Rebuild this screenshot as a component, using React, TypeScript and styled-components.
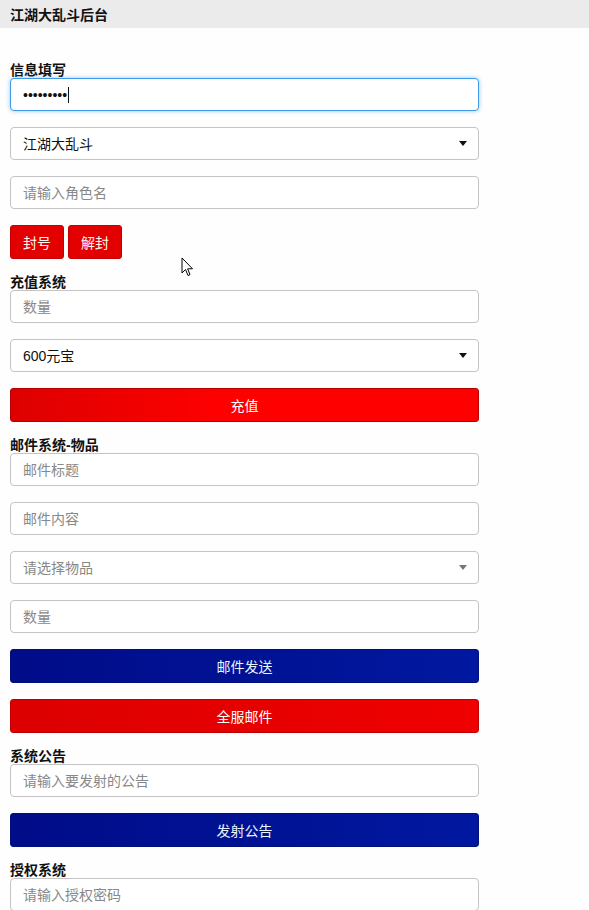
import React from "react";
import styled, { createGlobalStyle, css } from "styled-components";

const GlobalStyle = createGlobalStyle`
  html, body {
    margin: 0;
    padding: 0;
    background: #fefefe;
  }
  body {
    font-family: "Liberation Sans", "Noto Sans CJK SC", sans-serif;
    font-size: 14px;
    color: #111;
  }
  * {
    box-sizing: border-box;
  }
`;

const Page = styled.div`
  position: relative;
  width: 589px;
  min-height: 910px;
  overflow: hidden;
`;

const Header = styled.div`
  height: 28px;
  background-color: #ebebeb;
  padding: 0 10px;
  display: flex;
  align-items: center;
  font-weight: bold;
  font-size: 14px;
  color: #111;
`;

const Form = styled.div`
  width: 489px;
  padding: 35px 10px 0;
  display: flex;
  flex-direction: column;
  gap: 16px;
`;

const Section = styled.div`
  display: flex;
  flex-direction: column;
`;

const Label = styled.div`
  font-weight: bold;
  font-size: 14px;
  line-height: 15px;
  color: #111;
`;

const Stack = styled.div`
  display: flex;
  flex-direction: column;
  gap: 16px;
`;

const fieldBase = css`
  width: 469px;
  height: 33px;
  border: 1px solid #c4c4c4;
  border-radius: 4px;
  background: #fff;
  padding: 0 12px;
  font-family: "Liberation Sans", "Noto Sans CJK SC", sans-serif;
  font-size: 14px;
  color: #111;
  outline: none;
`;

const Input = styled.input<{ $focused?: boolean }>`
  ${fieldBase}

  &::placeholder {
    color: #888;
  }

  ${({ $focused }) =>
    $focused &&
    css`
      border-color: #3d9be9;
      box-shadow: 0 0 4px rgba(61, 155, 233, 0.55);
    `}
`;

const FocusedWrap = styled.div`
  position: relative;
  width: 469px;
`;

/* 输入框里的文字光标 */
const Caret = styled.span`
  position: absolute;
  left: 58px;
  top: 9px;
  width: 1px;
  height: 16px;
  background: #111;
  pointer-events: none;
`;

const SelectWrap = styled.div<{ $muted?: boolean }>`
  position: relative;
  width: 469px;

  &::after {
    content: "";
    position: absolute;
    right: 12px;
    top: 14px;
    border-left: 4px solid transparent;
    border-right: 4px solid transparent;
    border-top: 5px solid ${({ $muted }) => ($muted ? "#777" : "#111")};
    pointer-events: none;
  }
`;

const Select = styled.select<{ $muted?: boolean }>`
  ${fieldBase}
  appearance: none;
  -webkit-appearance: none;
  color: ${({ $muted }) => ($muted ? "#888" : "#111")};
`;

const ButtonRow = styled.div`
  display: flex;
  gap: 4px;
`;

const SmallButton = styled.button`
  height: 34px;
  padding: 0 12px;
  border: 1px solid #c40000;
  border-radius: 3px;
  background-color: #e20000;
  color: #fff8f0;
  font-family: "Liberation Sans", "Noto Sans CJK SC", sans-serif;
  font-size: 14px;
  cursor: pointer;
`;

const WideButton = styled.button<{ $tone: "red" | "darkred" | "blue" }>`
  width: 469px;
  height: 34px;
  border-radius: 3px;
  font-family: "Liberation Sans", "Noto Sans CJK SC", sans-serif;
  font-size: 14px;
  color: #fff;
  cursor: pointer;
  ${({ $tone }) =>
    $tone === "blue"
      ? css`
          border: 1px solid #00107a;
          background: linear-gradient(90deg, #000c88 0%, #0018a0 100%);
          color: #e8f4ff;
        `
      : $tone === "darkred"
      ? css`
          border: 1px solid #c00000;
          background: linear-gradient(90deg, #dc0000 0%, #f00000 100%);
        `
      : css`
          border: 1px solid #b80000;
          background: linear-gradient(90deg, #dd0000 0%, #ff0000 45%, #ff0000 100%);
        `}
`;

const Pointer = styled.svg`
  position: absolute;
  left: 181px;
  top: 257px;
  pointer-events: none;
`;

const App: React.FC = () => {
  return (
    <Page>
      <GlobalStyle />
      <Header>江湖大乱斗后台</Header>
      <Form>
        <Section>
          <Label>信息填写</Label>
          <Stack>
            <FocusedWrap>
              <Input type="password" defaultValue="123456789" $focused />
              <Caret />
            </FocusedWrap>
            <SelectWrap>
              <Select defaultValue="jh">
                <option value="jh">江湖大乱斗</option>
              </Select>
            </SelectWrap>
            <Input placeholder="请输入角色名" />
            <ButtonRow>
              <SmallButton>封号</SmallButton>
              <SmallButton>解封</SmallButton>
            </ButtonRow>
          </Stack>
        </Section>

        <Section>
          <Label>充值系统</Label>
          <Stack>
            <Input placeholder="数量" />
            <SelectWrap>
              <Select defaultValue="600">
                <option value="600">600元宝</option>
              </Select>
            </SelectWrap>
            <WideButton $tone="red">充值</WideButton>
          </Stack>
        </Section>

        <Section>
          <Label>邮件系统-物品</Label>
          <Stack>
            <Input placeholder="邮件标题" />
            <Input placeholder="邮件内容" />
            <SelectWrap $muted>
              <Select $muted defaultValue="">
                <option value="" disabled>
                  请选择物品
                </option>
              </Select>
            </SelectWrap>
            <Input placeholder="数量" />
            <WideButton $tone="blue">邮件发送</WideButton>
            <WideButton $tone="darkred">全服邮件</WideButton>
          </Stack>
        </Section>

        <Section>
          <Label>系统公告</Label>
          <Stack>
            <Input placeholder="请输入要发射的公告" />
            <WideButton $tone="blue">发射公告</WideButton>
          </Stack>
        </Section>

        <Section>
          <Label>授权系统</Label>
          <Stack>
            <Input placeholder="请输入授权密码" />
          </Stack>
        </Section>
      </Form>

      {/* 截图中的鼠标指针 */}
      <Pointer width="13" height="21" viewBox="0 0 13 21">
        <path
          d="M1 1 L1 16 L4.5 12.5 L7 18.5 L9 17.6 L6.6 11.8 L11.5 11.8 Z"
          fill="#fff"
          stroke="#000"
          strokeWidth="1"
          strokeLinejoin="round"
        />
      </Pointer>
    </Page>
  );
};

export default App;
